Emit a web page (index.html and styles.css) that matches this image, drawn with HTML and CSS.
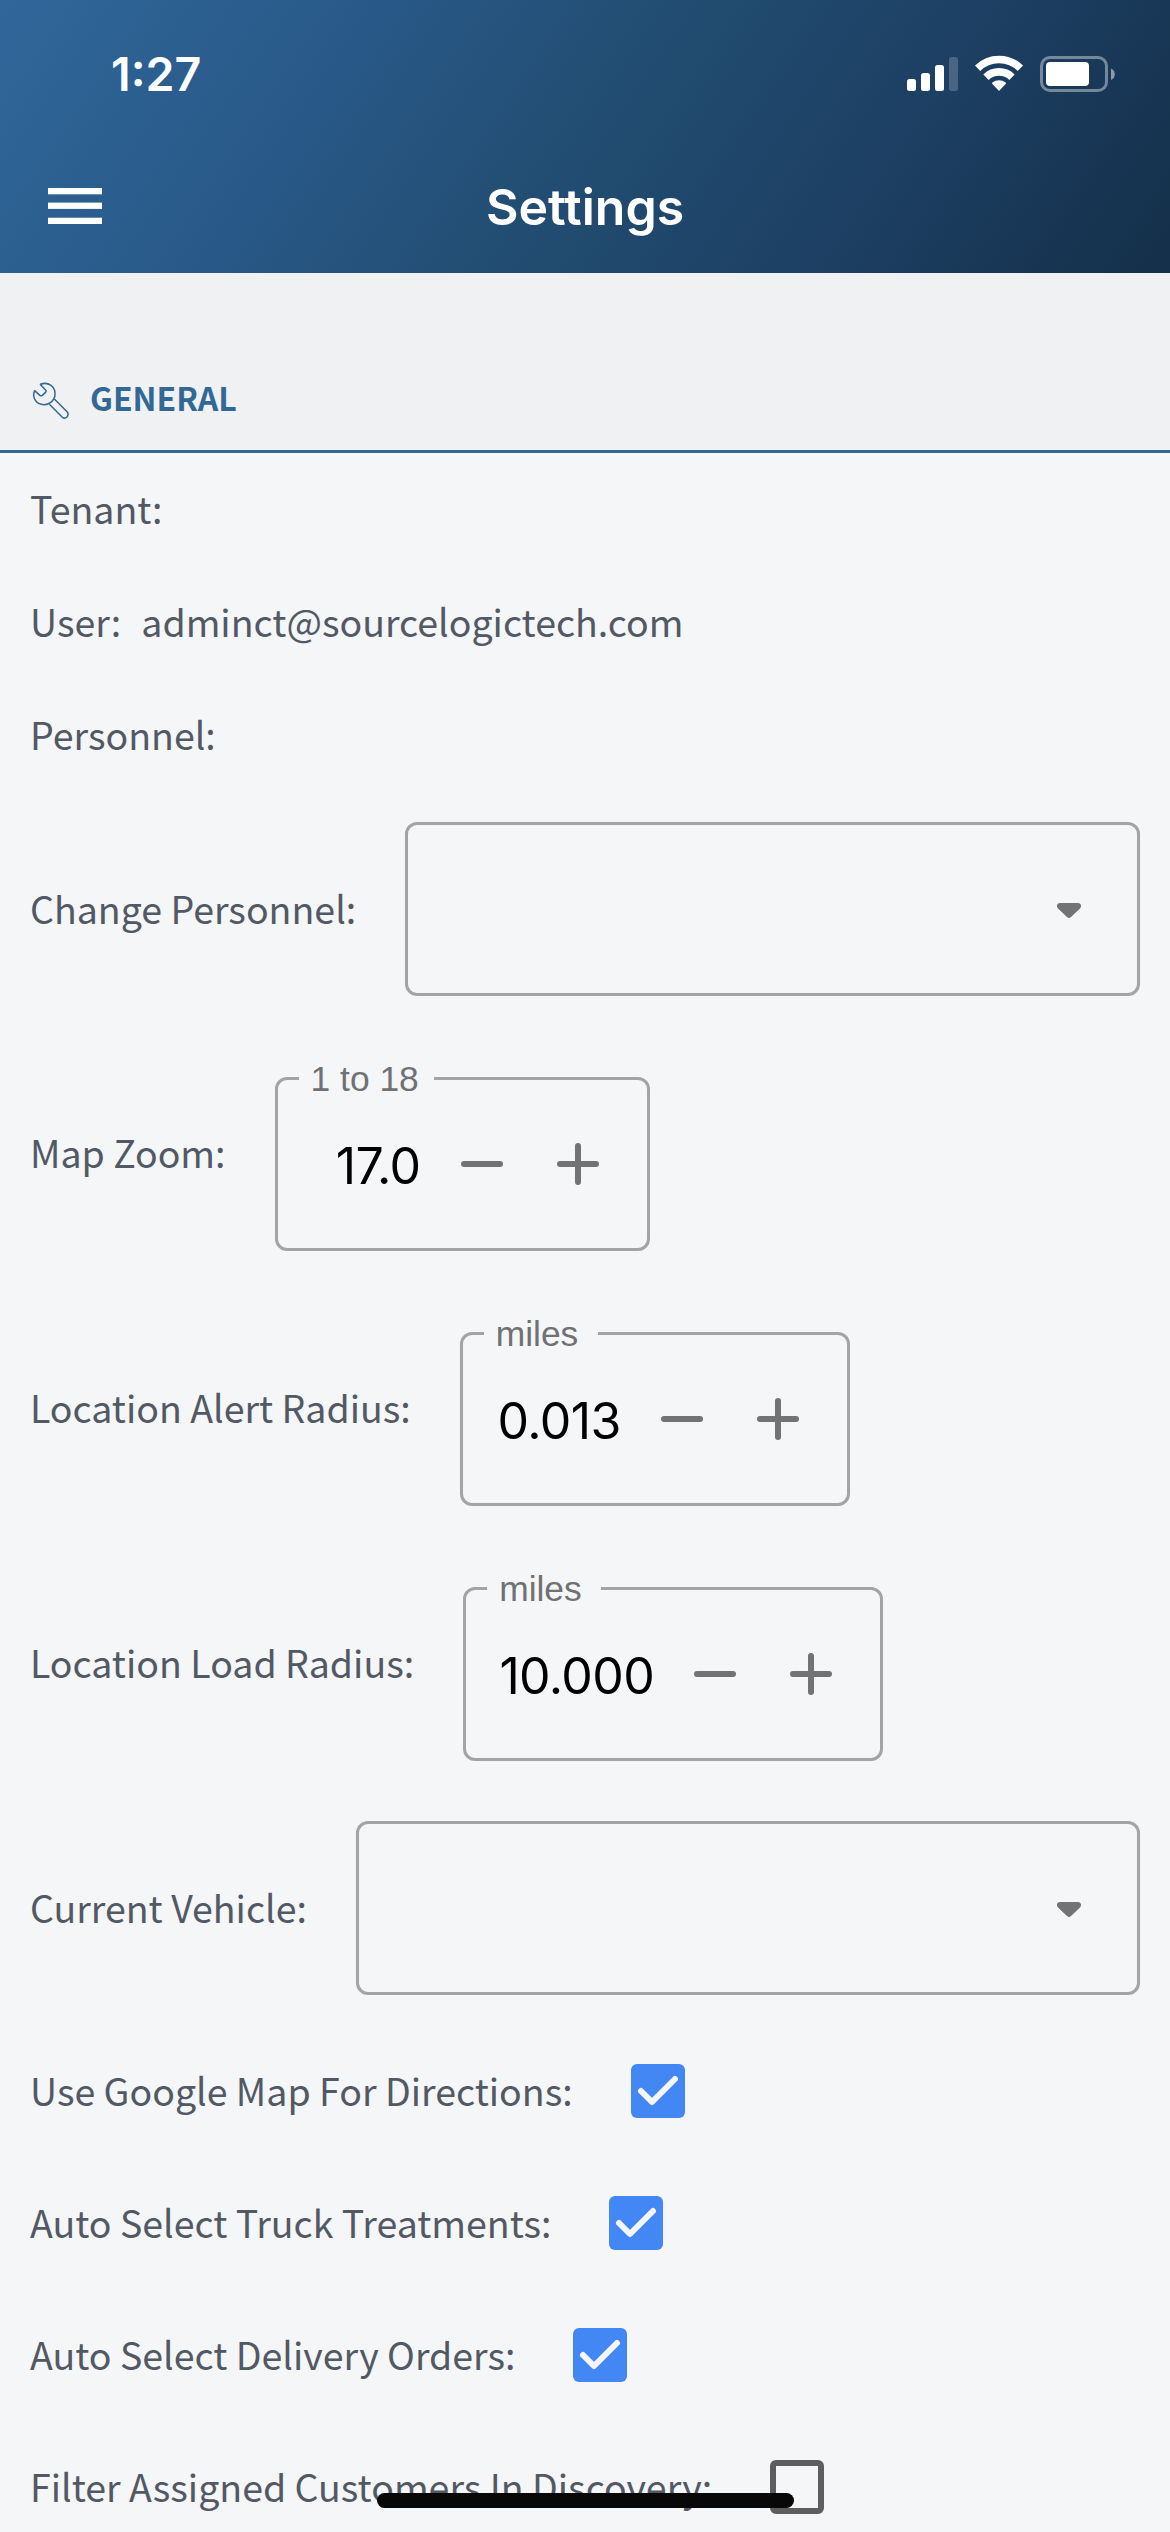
FILE: index.html
```html
<!DOCTYPE html>
<html lang="en">
<head>
<meta charset="utf-8">
<title>Settings</title>
<link rel="stylesheet" href="styles.css">
</head>
<body>
<header class="app-header">
  <div class="status-bar">
    <span class="clock">1:27</span>
    <div class="status-icons">
      <svg class="signal" viewBox="0 0 51 34" fill="#fff"><rect y="22" width="9" height="12" rx="2.5"/><rect x="14" y="16" width="9" height="18" rx="2.5"/><rect x="28" y="8" width="9" height="26" rx="2.5"/><rect x="42" width="9" height="34" rx="2.5" opacity=".2"/></svg>
      <svg class="wifi" viewBox="0 0 48 36" fill="none" stroke="#fff" stroke-width="7.6"><path d="M2.6 13.2a30.5 30.5 0 0 1 42.8 0"/><path d="M11 22.2a18.6 18.6 0 0 1 26 0"/><path d="M24 36l-6.6-6.9c-.5-.6-.4-1.1 0-1.5a10.200 10.200 0 0 1 13.200 0c.4.4.5.9 0 1.500z" fill="#fff" stroke="none"/></svg>
      <svg class="battery" viewBox="0 0 75 36"><rect x="1.500" y="1.500" width="65" height="33" rx="8.500" fill="none" stroke="#fff" stroke-width="3" opacity=".4"/><rect x="6" y="6" width="43" height="24" rx="4" fill="#fff"/><path d="M71 12.500c5 2 5 9.500 0 11.500z" fill="#fff" opacity=".5"/></svg>
    </div>
  </div>
  <div class="title-bar">
    <svg class="menu" viewBox="0 0 54 36" fill="#fff"><rect width="54" height="6.300"/><rect y="14.600" width="54" height="6.300"/><rect y="29.700" width="54" height="6.300"/></svg>
    <h1 class="title">Settings</h1>
  </div>
</header>
<div class="section-header">
  <svg class="wrench" viewBox="96 98 114 114" fill="none" stroke="#336895" stroke-width="4.500" stroke-linejoin="round"><path d="M122 106.500q-2-1.500 1-2.500C146 97 166 112 165 134c0 5-1 10-3 14-6 12-22 21-38 17-21-5-27-26-20-41l15.500 14q4 3 7.500 0l9.500-9q3.500-3.500 0-7z"/><path d="M163 149l39 39c7 11-5 23-15 16l-39-39"/></svg>
  <h2 class="section-title">GENERAL</h2>
</div>
<main class="settings">
  <div class="info">
    <div class="info-row"><span>Tenant:</span></div>
    <div class="info-row"><span>User:</span><span>adminct@sourcelogictech.com</span></div>
    <div class="info-row"><span>Personnel:</span></div>
  </div>
  <div class="field">
    <label class="label">Change Personnel:</label>
    <div class="select"><svg class="caret" viewBox="0 0 24 15"><path d="M3 0h18c3 0 4 3.500 2 5.500l-9 8.500q-2 2-4 0L1 5.500C-1 3.500 0 0 3 0z" fill="#727375"/></svg></div>
  </div>
  <div class="field field-number">
    <label class="label">Map Zoom:</label>
    <div class="stepper stepper-zoom">
      <span class="legend">1 to 18</span><span class="value">17.0</span>
      <svg class="step" viewBox="0 0 42 42"><path d="M3 21h36"/></svg>
      <svg class="step" viewBox="0 0 42 42"><path d="M3 21h36M21 3v36"/></svg>
    </div>
  </div>
  <div class="field field-number">
    <label class="label">Location Alert Radius:</label>
    <div class="stepper stepper-alert">
      <span class="legend legend-miles">miles</span><span class="value">0.013</span>
      <svg class="step" viewBox="0 0 42 42"><path d="M3 21h36"/></svg>
      <svg class="step" viewBox="0 0 42 42"><path d="M3 21h36M21 3v36"/></svg>
    </div>
  </div>
  <div class="field field-number">
    <label class="label">Location Load Radius:</label>
    <div class="stepper stepper-load">
      <span class="legend legend-miles">miles</span><span class="value">10.000</span>
      <svg class="step" viewBox="0 0 42 42"><path d="M3 21h36"/></svg>
      <svg class="step" viewBox="0 0 42 42"><path d="M3 21h36M21 3v36"/></svg>
    </div>
  </div>
  <div class="field field-vehicle">
    <label class="label">Current Vehicle:</label>
    <div class="select"><svg class="caret" viewBox="0 0 24 15"><path d="M3 0h18c3 0 4 3.500 2 5.500l-9 8.500q-2 2-4 0L1 5.500C-1 3.500 0 0 3 0z" fill="#727375"/></svg></div>
  </div>
  <div class="options">
    <div class="option"><label class="label">Use Google Map For Directions:</label><span class="checkbox checked"><svg viewBox="0 0 54 54"><path d="M10 27l11 11 23-23"/></svg></span></div>
    <div class="option"><label class="label">Auto Select Truck Treatments:</label><span class="checkbox checked"><svg viewBox="0 0 54 54"><path d="M10 27l11 11 23-23"/></svg></span></div>
    <div class="option"><label class="label">Auto Select Delivery Orders:</label><span class="checkbox checked"><svg viewBox="0 0 54 54"><path d="M10 27l11 11 23-23"/></svg></span></div>
    <div class="option"><label class="label">Filter Assigned Customers In Discovery:</label><span class="checkbox"></span></div>
  </div>
</main>
<div class="home-indicator"></div>
</body>
</html>
```
FILE: styles.css
```css
* { box-sizing: border-box; }
body {
  margin: 0;
  width: 1170px;
  height: 2532px;
  overflow: hidden;
  position: relative;
  background: #f5f6f8;
  color: #525965;
  font: 37.5px/53px "Noto Sans CJK SC", "Noto Sans", sans-serif;
}
svg { display: block; flex: none; }

.app-header {
  height: 273px;
  background: linear-gradient(124deg, #30679a 0%, #295a8a 25%, #224d72 50%, #1c3e61 76%, #142f49 100%);
  color: #fff;
  font-family: Inter, sans-serif;
}
.status-bar {
  height: 148px;
  padding: 0 55px 0 111px;
  display: flex;
  align-items: center;
  justify-content: space-between;
}
.clock { font-size: 46.5px; font-weight: 600; padding-top: 1px; }
.status-icons { display: flex; align-items: center; gap: 17px; }
.signal { width: 51px; height: 34px; }
.wifi { width: 48px; height: 36px; margin-top: -2px; }
.battery { width: 75px; height: 36px; }
.title-bar {
  height: 116px;
  padding: 0 48px;
  display: grid;
  grid-template-columns: 54px 1fr 54px;
  align-items: center;
}
.menu { width: 54px; height: 36px; }
.title { margin: 0; padding-top: 2px; font-size: 50px; font-weight: 600; text-align: center; }

.section-header {
  height: 180px;
  padding: 72px 32px 0;
  display: flex;
  align-items: center;
  gap: 20px;
  background: #eff1f3;
  border-bottom: 3px solid #336895;
}
.wrench { width: 38px; height: 38px; margin-top: 6px; }
.section-title { margin: 0; font-size: 32px; font-weight: 700; color: #336895; }

.settings { padding: 28px 30px 0; }
.info { display: flex; flex-direction: column; gap: 60px; }
.info-row { display: flex; gap: 20px; }
.field { margin-top: 62px; display: flex; align-items: center; gap: 49px; }
.label { padding-bottom: 3px; white-space: nowrap; }
.field-number { margin-top: 81px; }
.field-number .label { padding-bottom: 25px; }
.field-vehicle { margin-top: 60px; }

.select, .stepper {
  height: 174px;
  border: 3px solid #a3a4a6;
  border-radius: 12px;
  display: flex;
  align-items: center;
}
.select { flex: 1; justify-content: flex-end; padding-right: 56px; }
.caret { width: 24px; height: 15px; margin-top: 3px; }
.stepper { position: relative; padding-right: 48px; gap: 54px; }
.stepper-zoom { width: 375px; }
.stepper-alert { width: 390px; }
.stepper-load { width: 420px; }
.legend {
  position: absolute;
  left: 21px;
  top: -22px;
  width: 135px;
  padding-left: 12px;
  background: #f5f6f8;
  color: #707173;
  font: 35.4px/42px "Liberation Sans", Arial, sans-serif;
}
.legend-miles { width: 114px; }
.value {
  flex: 1;
  margin-right: -14px;
  padding-top: 3px;
  text-align: right;
  color: #000;
  font: 50px/60px Inter, sans-serif;
  letter-spacing: -0.6px;
}
.step { width: 42px; height: 42px; fill: none; stroke: #727375; stroke-width: 6; stroke-linecap: round; }

.options { margin-top: 69px; display: flex; flex-direction: column; gap: 78px; }
.option { height: 54px; display: flex; align-items: center; gap: 58px; }
.checkbox { flex: none; width: 54px; height: 54px; border: 6px solid #5e5e5f; border-radius: 6px; }
.checked { border: 0; background: #4387f5; }
.checked svg { fill: none; stroke: #f5f6f8; stroke-width: 6; stroke-linecap: round; stroke-linejoin: round; }

.home-indicator {
  position: absolute;
  left: 377px;
  top: 2493px;
  width: 417px;
  height: 15px;
  border-radius: 8px;
  background: #080808;
}
```
